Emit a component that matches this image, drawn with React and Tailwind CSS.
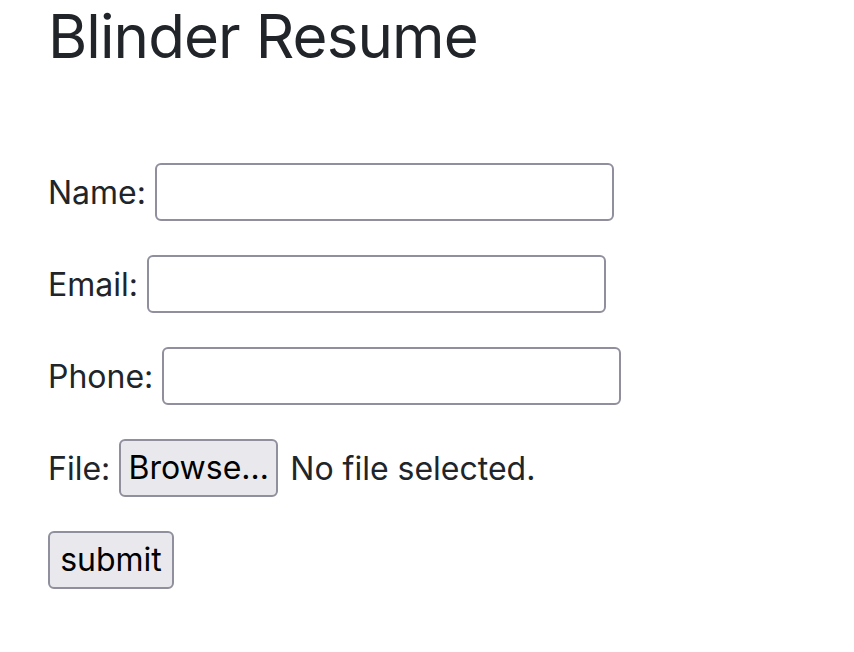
const Field = ({ label }) => (
  <div className="flex items-center gap-[9px]">
    <label className="text-[32px] leading-none pt-[2px]">{label}:</label>
    <input
      type="text"
      className="w-[459px] h-[58px] border-2 border-[#8f8f9d] rounded-[6px] bg-white px-2"
    />
  </div>
);

export default function App() {
  return (
    <div
      className="min-h-screen bg-white text-[#212529] pl-12"
      style={{ fontFamily: 'Inter, "Noto Sans", sans-serif' }}
    >
      <h1 className="text-[60px] leading-[1.22] tracking-[-0.015em]">
        Blinder Resume
      </h1>

      <form className="flex flex-col items-start gap-[34px] mt-[90px]">
        <Field label="Name" />
        <Field label="Email" />
        <Field label="Phone" />

        <div className="flex items-center">
          <span className="text-[32px] leading-none pt-[2px]">File:</span>
          <button
            type="button"
            className="ml-[9px] h-[58px] w-[159px] border-2 border-[#8f8f9d] rounded-[6px] bg-[#e9e9ed] text-black text-[32px] leading-none"
          >
            Browse…
          </button>
          <span className="ml-[12px] text-[32px] leading-none pt-[2px]">No file selected.</span>
        </div>

        <button
          type="submit"
          className="h-[58px] w-[126px] border-2 border-[#8f8f9d] rounded-[6px] bg-[#e9e9ed] text-black text-[32px] leading-none"
        >
          submit
        </button>
      </form>
    </div>
  );
}
